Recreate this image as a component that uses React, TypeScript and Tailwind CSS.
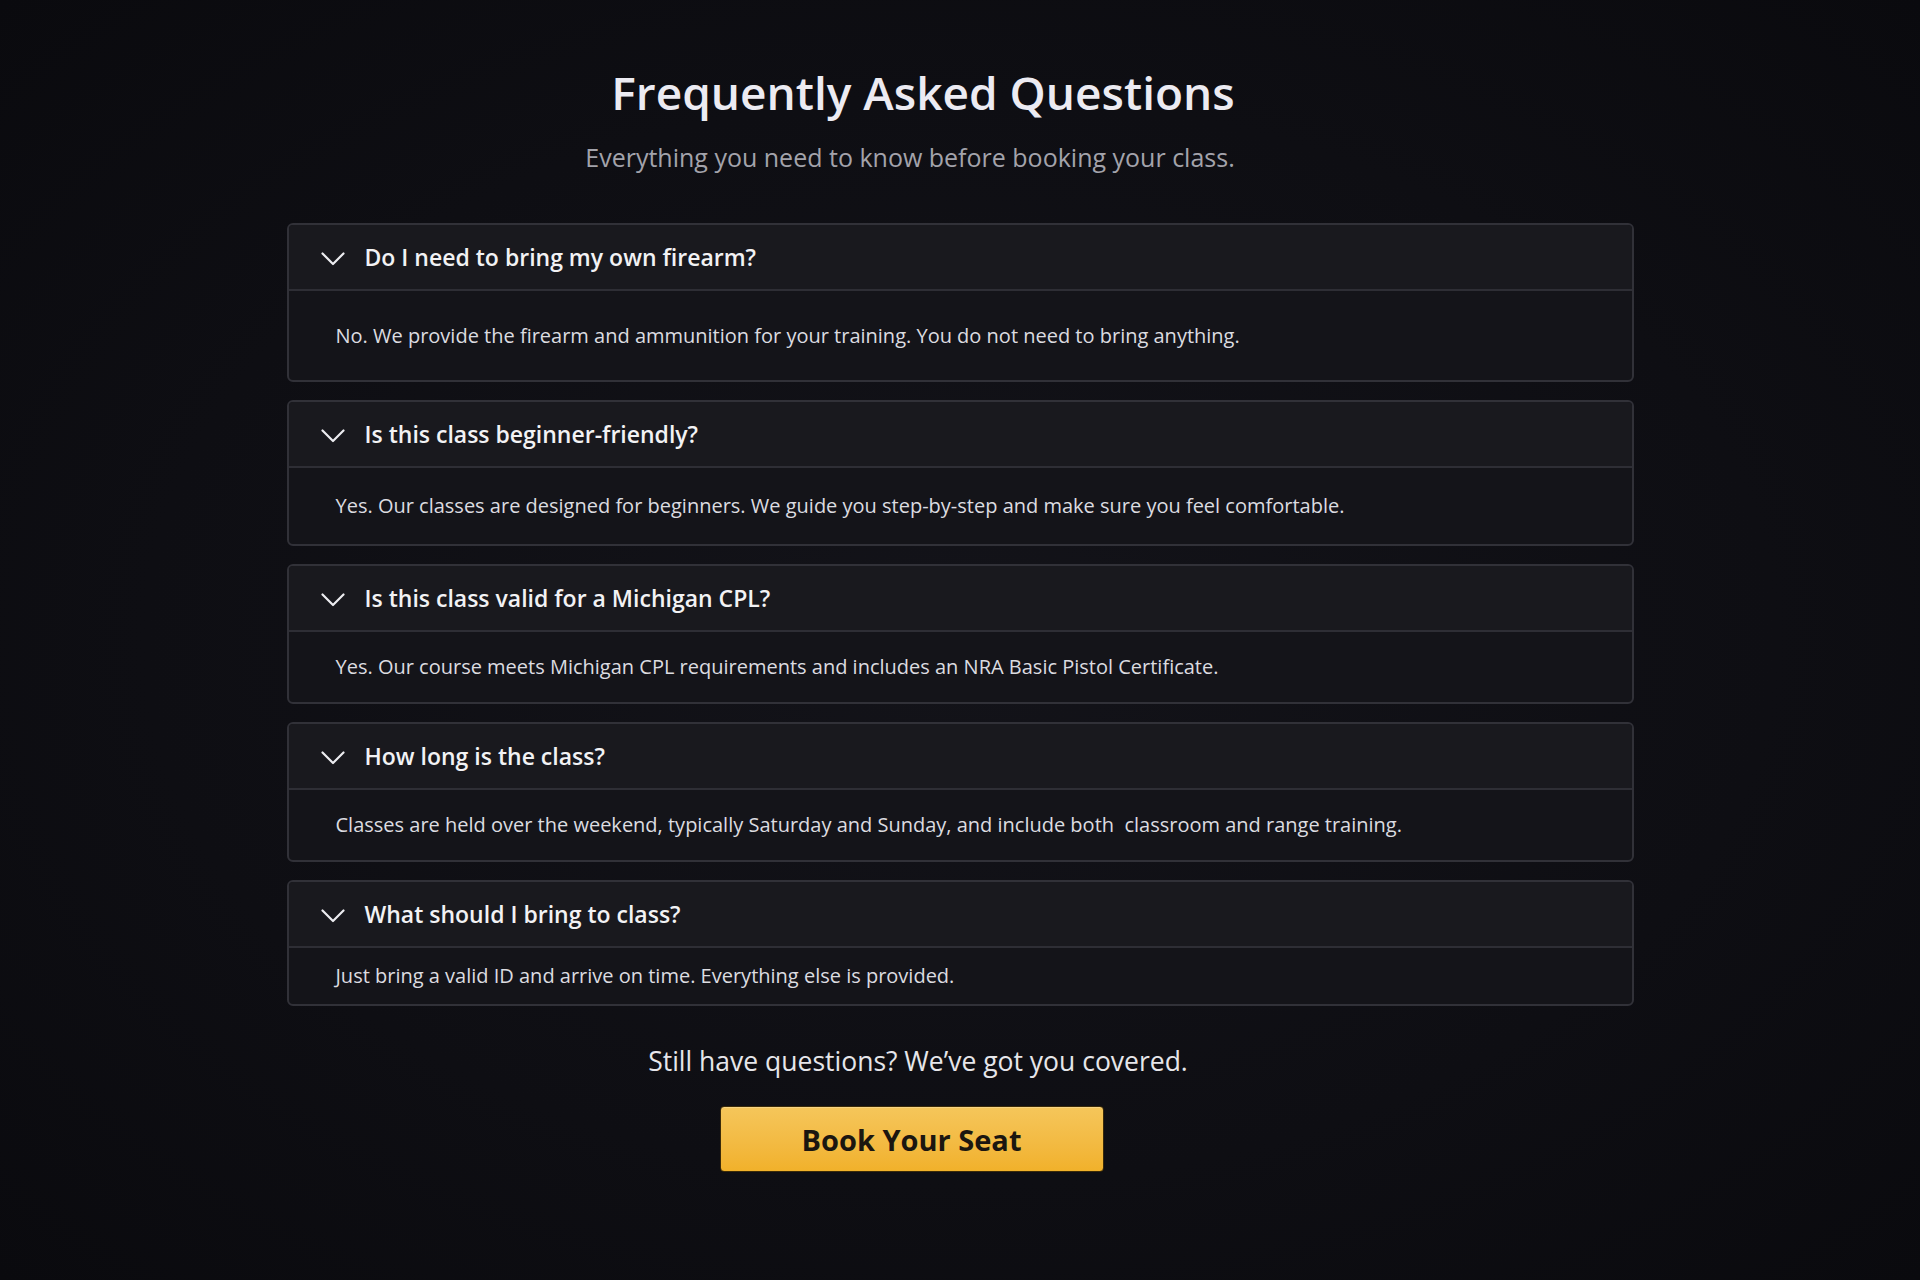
import { useState } from "react";

type Faq = { q: string; a: string; body: string };

const faqs: Faq[] = [
  {
    q: "Do I need to bring my own firearm?",
    a: "No. We provide the firearm and ammunition for your training. You do not need to bring anything.",
    body: "h-[89px]",
  },
  {
    q: "Is this class beginner-friendly?",
    a: "Yes. Our classes are designed for beginners. We guide you step-by-step and make sure you feel comfortable.",
    body: "h-[76px]",
  },
  {
    q: "Is this class valid for a Michigan CPL?",
    a: "Yes. Our course meets Michigan CPL requirements and includes an NRA Basic Pistol Certificate.",
    body: "h-[70px]",
  },
  {
    q: "How long is the class?",
    a: "Classes are held over the weekend, typically Saturday and Sunday, and include both  classroom and range training.",
    body: "h-[70px]",
  },
  {
    q: "What should I bring to class?",
    a: "Just bring a valid ID and arrive on time. Everything else is provided.",
    body: "h-[56px]",
  },
];

function Chevron() {
  return (
    <svg width="24" height="14" viewBox="0 0 24 14" fill="none" className="mt-1 shrink-0">
      <path d="M1.5 1.5 L12 12 L22.5 1.5" stroke="#ececf0" strokeWidth="2.2" strokeLinecap="round" strokeLinejoin="round" />
    </svg>
  );
}

function FaqItem({ item }: { item: Faq }) {
  const [open, setOpen] = useState(true);
  return (
    <div className="overflow-hidden rounded-[6px] border-2 border-[#313138] bg-[#141419]">
      <button
        onClick={() => setOpen(!open)}
        className="flex h-[66px] w-full items-center gap-5 border-b-2 border-[#2e2e35] bg-[#19191e] pl-8 text-left"
      >
        <Chevron />
        <span className="text-[23px] font-semibold text-[#f2f2f4]">{item.q}</span>
      </button>
      {open && (
        <div className={`flex items-center pl-[47px] ${item.body}`}>
          <p className="whitespace-pre text-[20px] text-[#dcdce0]">{item.a}</p>
        </div>
      )}
    </div>
  );
}

export default function App() {
  return (
    <div
      className="min-h-[1280px] bg-[#0d0d12] bg-[radial-gradient(ellipse_at_center,#131319_0%,#0e0e13_60%,#0a0a0e_100%)] pt-[65px] text-white"
      style={{ fontFamily: '"Open Sans", "Noto Sans", sans-serif' }}
    >
      {/* Heading */}
      <div className="flex flex-col items-center pr-[84px]">
        <h1 className="ml-[10px] text-[46px] font-semibold leading-[1.2] text-[#ecebf2]">Frequently Asked Questions</h1>
        <p className="mr-[16px] mt-5 text-[25px] leading-[1.4] text-[#a3a3ab]">
          Everything you need to know before booking your class.
        </p>
      </div>

      {/* Accordion */}
      <div className="mx-auto mt-12 flex w-[1347px] flex-col gap-[18px]">
        {faqs.map((f) => (
          <FaqItem key={f.q} item={f} />
        ))}
      </div>

      {/* CTA */}
      <div className="mt-[37px] flex flex-col items-center pr-[84px]">
        <p className="text-[26.5px] leading-[1.4] text-[#e6e6ea]">Still have questions? We’ve got you covered.</p>
        <button className="mr-[13px] mt-[26px] flex h-[66px] w-[384px] items-center justify-center rounded-[4px] border border-[#3a2a08] bg-gradient-to-b from-[#f5c65a] to-[#f1b12a] text-[29px] font-bold text-[#1b1610] shadow-[inset_0_1px_0_rgba(255,255,255,0.25)]">
          Book Your Seat
        </button>
      </div>
    </div>
  );
}
